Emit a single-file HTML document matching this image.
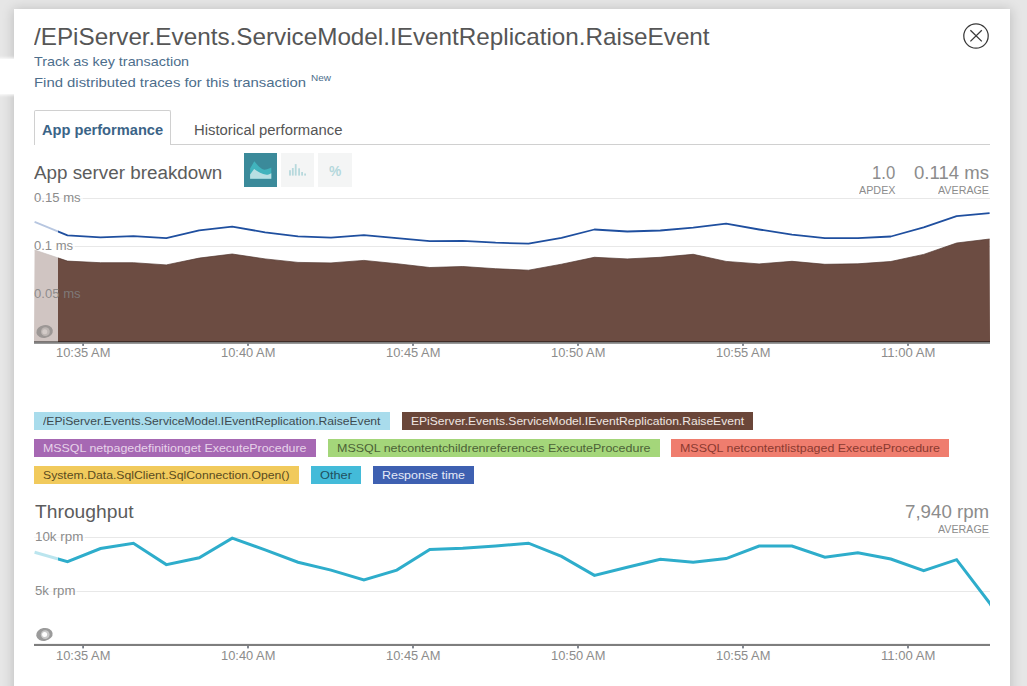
<!DOCTYPE html><html><head><meta charset="utf-8"><title>Transaction</title><style>
*{margin:0;padding:0;box-sizing:border-box}
html,body{width:1027px;height:686px;overflow:hidden;background:#e6e6e6;font-family:"Liberation Sans",sans-serif}
#panel{position:absolute;left:14px;top:9px;width:996px;height:700px;background:#fff;box-shadow:0 1px 11px 1px rgba(0,0,0,0.17)}
#peek{position:absolute;left:-10px;top:59px;width:30px;height:35px;background:#fff;box-shadow:0 0 3px 1px #fff}
.t{position:absolute;white-space:nowrap;line-height:1;transform-origin:0 0}
.lg{position:absolute;height:17.5px}
#tab1{position:absolute;left:34px;top:110px;width:137px;height:35px;border:1px solid #d0d0d0;border-bottom:none;border-radius:2px 2px 0 0;background:#fff}
#tabline{position:absolute;left:170px;top:144px;width:820px;height:1px;background:#d0d0d0}
.btn{position:absolute;top:153px;width:33px;height:34px;background:#f4f5f5}
svg{position:absolute;left:0;top:0}
</style></head><body>
<div id="panel"></div><div id="peek"></div>
<div id="tab1"></div><div id="tabline"></div>
<div class="btn" style="left:244px;background:#3b8a9a"></div><div class="btn" style="left:281px"></div><div class="btn" style="left:318px;width:34px"></div>
<div class="lg" style="left:34.0px;top:412.2px;width:355.5px;background:#a9dcec"></div>
<div class="lg" style="left:402.0px;top:412.2px;width:351.0px;background:#6a4639"></div>
<div class="lg" style="left:34.0px;top:439.2px;width:281.5px;background:#a668b3"></div>
<div class="lg" style="left:328.0px;top:439.2px;width:331.5px;background:#a4d67a"></div>
<div class="lg" style="left:671.0px;top:439.2px;width:278.0px;background:#ef7d6e"></div>
<div class="lg" style="left:34.0px;top:466.2px;width:264.5px;background:#f1ca5c"></div>
<div class="lg" style="left:311.0px;top:466.2px;width:50.0px;background:#43bbd9"></div>
<div class="lg" style="left:373.0px;top:466.2px;width:101.0px;background:#3e60b1"></div>
<svg width="1027" height="686" viewBox="0 0 1027 686"><defs><clipPath id="cp"><rect x="33" y="520" width="957" height="125"/></clipPath></defs><circle cx="976" cy="36" r="12.2" fill="none" stroke="#3a3a3a" stroke-width="1.25"/><path d="M970.4 30.2 L981.8 41.4 M981.8 30.2 L970.4 41.4" stroke="#3a3a3a" stroke-width="1.3" fill="none"/><path d="M250.1 168.5 L254.3 161.3 C258 166 262 170.5 266 169.5 C268.5 169 270 168 271.3 167.5 L271.3 178.8 L250.1 178.8 Z" fill="#41b3bd"/><path d="M250.1 174.5 L254.1 169 C258 171.5 262 174.5 266.5 174.7 C268.5 174.7 270 174 271.3 173.2 L271.3 178.8 L250.1 178.8 Z" fill="#b9dfe3"/><rect x="289.1" y="170.2" width="1.8" height="5.4" fill="#b7d9dd"/><rect x="291.9" y="168.0" width="1.8" height="7.6" fill="#b7d9dd"/><rect x="294.8" y="164.1" width="1.8" height="11.5" fill="#b7d9dd"/><rect x="298.2" y="168.3" width="1.8" height="7.3" fill="#b7d9dd"/><rect x="301.2" y="172.0" width="1.8" height="3.6" fill="#b7d9dd"/><rect x="304.2" y="173.5" width="1.8" height="2.1" fill="#b7d9dd"/><path d="M82.5 198.5H990 M75 246.5H990" stroke="#e8e8e8" stroke-width="1" fill="none"/><path d="M34 198.5H82.5 M34 246.5H75" stroke="#f4f4f4" stroke-width="1" fill="none"/><polygon points="34.6,250.0 67.5,261.1 100.5,262.7 133.4,262.7 166.3,264.9 199.2,258.1 232.2,254.0 265.1,258.9 298.0,262.4 331.0,262.9 363.9,260.4 396.8,263.7 429.8,267.5 462.7,266.5 495.6,268.7 528.5,270.2 561.5,264.2 594.4,257.3 627.3,258.9 660.3,257.3 693.2,254.3 726.1,261.4 759.1,263.9 792.0,261.3 824.9,264.3 857.9,263.8 890.8,261.5 923.7,254.4 956.6,243.0 989.6,239.0 990,342 34,342" fill="#6c4c42"/><polyline points="34.6,250.0 67.5,261.1 100.5,262.7 133.4,262.7 166.3,264.9 199.2,258.1 232.2,254.0 265.1,258.9 298.0,262.4 331.0,262.9 363.9,260.4 396.8,263.7 429.8,267.5 462.7,266.5 495.6,268.7 528.5,270.2 561.5,264.2 594.4,257.3 627.3,258.9 660.3,257.3 693.2,254.3 726.1,261.4 759.1,263.9 792.0,261.3 824.9,264.3 857.9,263.8 890.8,261.5 923.7,254.4 956.6,243.0 989.6,239.0" fill="none" stroke="#52372f" stroke-width="0.7"/><polyline points="34.6,221.9 67.5,235.3 100.5,237.3 133.4,236.1 166.3,238.1 199.2,230.3 232.2,226.7 265.1,232.3 298.0,236.3 331.0,237.6 363.9,235.1 396.8,238.1 429.8,241.1 462.7,240.9 495.6,242.7 528.5,243.7 561.5,237.8 594.4,229.5 627.3,231.5 660.3,230.5 693.2,227.7 726.1,223.7 759.1,229.5 792.0,234.7 824.9,238.2 857.9,238.2 890.8,236.5 923.7,227.3 956.6,216.2 989.6,213.2" fill="none" stroke="#1f4f9f" stroke-width="1.8" stroke-linejoin="round"/><rect x="34" y="215" width="24" height="127" fill="rgba(255,255,255,0.68)"/><rect x="34" y="341.2" width="956" height="2.6" fill="rgba(0,0,0,0.5)"/><rect x="82.2" y="343.5" width="1.8" height="2.4" fill="#767c86"/><rect x="247.1" y="343.5" width="1.8" height="2.4" fill="#767c86"/><rect x="412.1" y="343.5" width="1.8" height="2.4" fill="#767c86"/><rect x="577.1" y="343.5" width="1.8" height="2.4" fill="#767c86"/><rect x="742.1" y="343.5" width="1.8" height="2.4" fill="#767c86"/><rect x="907.1" y="343.5" width="1.8" height="2.4" fill="#767c86"/><ellipse cx="44.6" cy="331.5" rx="8.3" ry="6.4" fill="#9c9795" transform="rotate(-10 44.6 331.5)"/><circle cx="45.4" cy="331.7" r="4.4" fill="#bdb6b3"/><circle cx="44.8" cy="331.7" r="2.5" fill="#d3cbc8"/><path d="M84.5 537.5H990 M77 591.5H990" stroke="#e8e8e8" stroke-width="1" fill="none"/><path d="M34 537.5H84.5 M34 591.5H77" stroke="#f4f4f4" stroke-width="1" fill="none"/><polyline points="34.6,552.3 67.5,561.6 100.5,548.5 133.4,543.2 166.3,564.6 199.2,557.8 232.2,538.2 265.1,549.8 298.0,562.2 331.0,570.1 363.9,579.9 396.8,570.1 429.8,549.5 462.7,548.3 495.6,546.0 528.5,543.2 561.5,556.4 594.4,575.4 627.3,567.3 660.3,559.2 693.2,562.2 726.1,558.6 759.1,546.0 792.0,546.0 824.9,557.2 857.9,552.7 890.8,559.0 923.7,570.6 956.6,559.7 989.6,603.0 993,608.4" fill="none" stroke="#2eadcb" stroke-width="3" stroke-linejoin="miter" clip-path="url(#cp)"/><rect x="33" y="545" width="25" height="25" fill="rgba(255,255,255,0.68)"/><rect x="34" y="643.9" width="956" height="2.1" fill="#7e7e7e"/><rect x="82.2" y="646" width="1.8" height="2.4" fill="#767c86"/><rect x="247.1" y="646" width="1.8" height="2.4" fill="#767c86"/><rect x="412.1" y="646" width="1.8" height="2.4" fill="#767c86"/><rect x="577.1" y="646" width="1.8" height="2.4" fill="#767c86"/><rect x="742.1" y="646" width="1.8" height="2.4" fill="#767c86"/><rect x="907.1" y="646" width="1.8" height="2.4" fill="#767c86"/><ellipse cx="44.4" cy="634.4" rx="8.3" ry="6.4" fill="#9b9b9b" transform="rotate(-10 44.4 634.4)"/><circle cx="45.2" cy="634.6" r="4.4" fill="#cacaca"/><circle cx="44.6" cy="634.6" r="2.5" fill="#fff"/></svg>
<div class="t" id="t_pct" style="left:329.3px;top:162.5px;font-size:15px;color:#b4d8dc;font-weight:700;transform:scaleX(0.92)">%</div>
<div class="t" id="t_title" style="left:34.4px;top:25.01px;font-size:24px;font-weight:400;color:#565656;transform:scaleX(1.0109)">/EPiServer.Events.ServiceModel.IEventReplication.RaiseEvent</div>
<div class="t" id="t_track" style="left:34.4px;top:55.00px;font-size:13px;font-weight:400;color:#4d6e8c;transform:scaleX(1.1047)">Track as key transaction</div>
<div class="t" id="t_find" style="left:34.4px;top:76.00px;font-size:13px;font-weight:400;color:#4d6e8c;transform:scaleX(1.1441)">Find distributed traces for this transaction</div>
<div class="t" id="t_new" style="left:311.2px;top:73.01px;font-size:9.5px;font-weight:400;color:#4d6e8c;transform:scaleX(1.0465)">New</div>
<div class="t" id="t_tab1" style="left:41.9px;top:123.01px;font-size:14px;font-weight:700;color:#3b6487;transform:scaleX(1.0447)">App performance</div>
<div class="t" id="t_tab2" style="left:194.2px;top:123.01px;font-size:14px;font-weight:400;color:#555;transform:scaleX(1.0595)">Historical performance</div>
<div class="t" id="t_h1" style="left:34.4px;top:164.01px;font-size:18px;font-weight:400;color:#5c5c5c;transform:scaleX(1.0455)">App server breakdown</div>
<div class="t" id="t_apdexv" style="left:871.8px;top:164.01px;font-size:18px;font-weight:400;color:#8c8c8c;transform:scaleX(0.9268)">1.0</div>
<div class="t" id="t_avgv" style="left:914.0px;top:164.01px;font-size:18px;font-weight:400;color:#8c8c8c;transform:scaleX(1.0316)">0.114 ms</div>
<div class="t" id="t_apdex" style="left:859.0px;top:185.00px;font-size:11.5px;font-weight:400;color:#8c8c8c;transform:scaleX(0.9359)">APDEX</div>
<div class="t" id="t_avg1" style="left:938.0px;top:185.00px;font-size:11.5px;font-weight:400;color:#8c8c8c;transform:scaleX(0.9315)">AVERAGE</div>
<div class="t" id="t_y1" style="left:34.4px;top:192.01px;font-size:12.1px;font-weight:400;color:#8c8c8c;transform:scaleX(1.0829)">0.15 ms</div>
<div class="t" id="t_y2" style="left:34.4px;top:240.01px;font-size:12.1px;font-weight:400;color:#8c8c8c;transform:scaleX(1.0772)">0.1 ms</div>
<div class="t" id="t_y3" style="left:34.4px;top:288.01px;font-size:12.1px;font-weight:400;color:rgba(130,130,130,0.85);transform:scaleX(1.0829)">0.05 ms</div>
<div class="t" id="t_h2" style="left:34.7px;top:503.01px;font-size:18px;font-weight:400;color:#5c5c5c;transform:scaleX(1.0697)">Throughput</div>
<div class="t" id="t_rpmv" style="left:904.7px;top:503.01px;font-size:18px;font-weight:400;color:#8c8c8c;transform:scaleX(1.0389)">7,940 rpm</div>
<div class="t" id="t_avg2" style="left:938.2px;top:524.00px;font-size:11.5px;font-weight:400;color:#8c8c8c;transform:scaleX(0.9297)">AVERAGE</div>
<div class="t" id="t_y4" style="left:35.2px;top:531.01px;font-size:12.1px;font-weight:400;color:#8c8c8c;transform:scaleX(1.1056)">10k rpm</div>
<div class="t" id="t_y5" style="left:35.2px;top:585.01px;font-size:12.1px;font-weight:400;color:#8c8c8c;transform:scaleX(1.0928)">5k rpm</div>
<div class="t" id="t_xa0" style="left:56.3px;top:347.01px;font-size:12.3px;font-weight:400;color:#8c8c8c;transform:scaleX(1.0468)">10:35 AM</div>
<div class="t" id="t_xb0" style="left:56.3px;top:650.01px;font-size:12.3px;font-weight:400;color:#8c8c8c;transform:scaleX(1.0468)">10:35 AM</div>
<div class="t" id="t_xa1" style="left:221.2px;top:347.01px;font-size:12.3px;font-weight:400;color:#8c8c8c;transform:scaleX(1.0468)">10:40 AM</div>
<div class="t" id="t_xb1" style="left:221.2px;top:650.01px;font-size:12.3px;font-weight:400;color:#8c8c8c;transform:scaleX(1.0468)">10:40 AM</div>
<div class="t" id="t_xa2" style="left:386.2px;top:347.01px;font-size:12.3px;font-weight:400;color:#8c8c8c;transform:scaleX(1.0468)">10:45 AM</div>
<div class="t" id="t_xb2" style="left:386.2px;top:650.01px;font-size:12.3px;font-weight:400;color:#8c8c8c;transform:scaleX(1.0468)">10:45 AM</div>
<div class="t" id="t_xa3" style="left:551.2px;top:347.01px;font-size:12.3px;font-weight:400;color:#8c8c8c;transform:scaleX(1.0468)">10:50 AM</div>
<div class="t" id="t_xb3" style="left:551.2px;top:650.01px;font-size:12.3px;font-weight:400;color:#8c8c8c;transform:scaleX(1.0468)">10:50 AM</div>
<div class="t" id="t_xa4" style="left:716.2px;top:347.01px;font-size:12.3px;font-weight:400;color:#8c8c8c;transform:scaleX(1.0468)">10:55 AM</div>
<div class="t" id="t_xb4" style="left:716.2px;top:650.01px;font-size:12.3px;font-weight:400;color:#8c8c8c;transform:scaleX(1.0468)">10:55 AM</div>
<div class="t" id="t_xa5" style="left:881.2px;top:347.01px;font-size:12.3px;font-weight:400;color:#8c8c8c;transform:scaleX(1.0657)">11:00 AM</div>
<div class="t" id="t_xb5" style="left:881.2px;top:650.01px;font-size:12.3px;font-weight:400;color:#8c8c8c;transform:scaleX(1.0657)">11:00 AM</div>
<div class="t" id="t_lg0" style="left:42.8px;top:415.01px;font-size:11.6px;font-weight:400;color:#3d4a50;transform:scaleX(1.0453)">/EPiServer.Events.ServiceModel.IEventReplication.RaiseEvent</div>
<div class="t" id="t_lg1" style="left:410.8px;top:415.01px;font-size:11.6px;font-weight:400;color:#efe6e2;transform:scaleX(1.0418)">EPiServer.Events.ServiceModel.IEventReplication.RaiseEvent</div>
<div class="t" id="t_lg2" style="left:42.8px;top:442.01px;font-size:11.6px;font-weight:400;color:#e6d3e9;transform:scaleX(1.0693)">MSSQL netpagedefinitionget ExecuteProcedure</div>
<div class="t" id="t_lg3" style="left:336.8px;top:442.01px;font-size:11.6px;font-weight:400;color:#4c6237;transform:scaleX(1.0754)">MSSQL netcontentchildrenreferences ExecuteProcedure</div>
<div class="t" id="t_lg4" style="left:679.8px;top:442.01px;font-size:11.6px;font-weight:400;color:#8b3a30;transform:scaleX(1.0720)">MSSQL netcontentlistpaged ExecuteProcedure</div>
<div class="t" id="t_lg5" style="left:42.8px;top:469.01px;font-size:11.6px;font-weight:400;color:#5a4a20;transform:scaleX(1.0538)">System.Data.SqlClient.SqlConnection.Open()</div>
<div class="t" id="t_lg6" style="left:319.8px;top:469.01px;font-size:11.6px;font-weight:400;color:#21505e;transform:scaleX(1.1034)">Other</div>
<div class="t" id="t_lg7" style="left:381.8px;top:469.01px;font-size:11.6px;font-weight:400;color:#e4e9f7;transform:scaleX(1.0731)">Response time</div>
</body></html>
